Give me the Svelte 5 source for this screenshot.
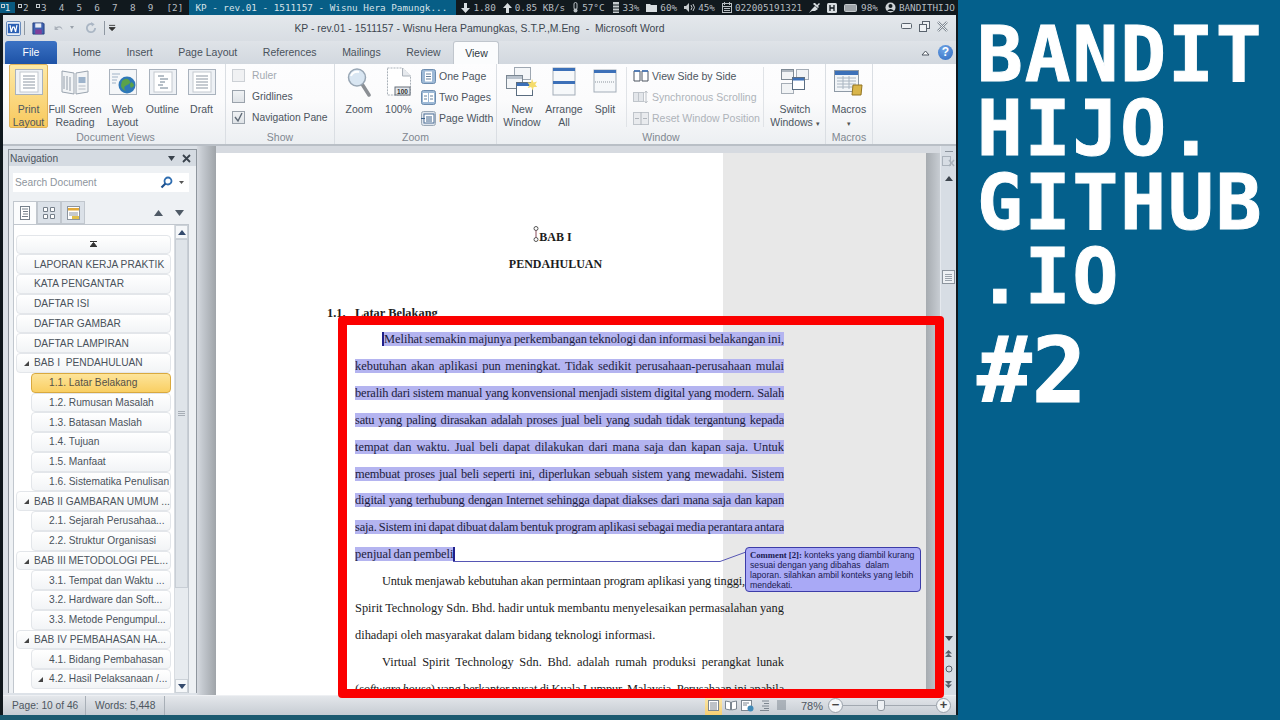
<script lang="ts">
	const workspaces = ['2', '3', '4', '5', '6', '7', '8', '9'];
	const tabs = ['Home', 'Insert', 'Page Layout', 'References', 'Mailings', 'Review'];

	const tree = [
		{ level: 0, text: '' , top: true },
		{ level: 0, text: 'LAPORAN KERJA PRAKTIK' },
		{ level: 0, text: 'KATA PENGANTAR' },
		{ level: 0, text: 'DAFTAR ISI' },
		{ level: 0, text: 'DAFTAR GAMBAR' },
		{ level: 0, text: 'DAFTAR LAMPIRAN' },
		{ level: 0, text: 'BAB I  PENDAHULUAN', open: true },
		{ level: 1, text: '1.1. Latar Belakang', active: true },
		{ level: 1, text: '1.2. Rumusan Masalah' },
		{ level: 1, text: '1.3. Batasan Maslah' },
		{ level: 1, text: '1.4. Tujuan' },
		{ level: 1, text: '1.5. Manfaat' },
		{ level: 1, text: '1.6. Sistematika Penulisan' },
		{ level: 0, text: 'BAB II GAMBARAN UMUM ...', open: true },
		{ level: 1, text: '2.1. Sejarah Perusahaa...' },
		{ level: 1, text: '2.2. Struktur Organisasi' },
		{ level: 0, text: 'BAB III METODOLOGI PEL...', open: true },
		{ level: 1, text: '3.1. Tempat dan Waktu ...' },
		{ level: 1, text: '3.2. Hardware dan Soft...' },
		{ level: 1, text: '3.3. Metode Pengumpul...' },
		{ level: 0, text: 'BAB IV PEMBAHASAN HA...', open: true },
		{ level: 1, text: '4.1. Bidang Pembahasan' },
		{ level: 1, text: '4.2. Hasil Pelaksanaan /...', open: true }
	];

	// lines Word squeezed together get the tight class
	const selected = [
		{ text: 'kebutuhan akan aplikasi pun meningkat. Tidak sedikit perusahaan-perusahaan mulai' },
		{ text: 'beralih dari sistem manual yang konvensional menjadi sistem digital yang modern. Salah', tight: true },
		{ text: 'satu yang paling dirasakan adalah proses jual beli yang sudah tidak tergantung kepada', tight: true },
		{ text: 'tempat dan waktu. Jual beli dapat dilakukan dari mana saja dan kapan saja. Untuk' },
		{ text: 'membuat proses jual beli seperti ini, diperlukan sebuah sistem yang mewadahi. Sistem', tight: true },
		{ text: 'digital yang terhubung dengan Internet sehingga dapat diakses dari mana saja dan kapan', tight: true },
		{ text: 'saja. Sistem ini dapat dibuat dalam bentuk program aplikasi sebagai media perantara antara', tight: true }
	];
</script>

{#snippet pageIcon(inner)}
	<svg width="30" height="28" viewBox="0 0 30 28">
		<rect x="1.5" y="1.5" width="27" height="25" fill="#eef1f5" stroke="#a9b2bd" />
		<rect x="6" y="4" width="18" height="20" fill="#fff" stroke="#c3c9d0" />
		{@render inner()}
	</svg>
{/snippet}

{#snippet lines()}
	<path d="M9 8h12M9 11h12M9 14h12M9 17h12M9 20h12" stroke="#8d97a3" />
{/snippet}

{#snippet outlineLines()}
	<path d="M10 8h6M12 11h8M12 14h5M10 17h5M12 20h8" stroke="#6f8090" />
{/snippet}

{#snippet arrow(d, color = '#4f5a66')}
	<svg width="9" height="6" viewBox="0 0 9 6"><path {d} fill={color} /></svg>
{/snippet}

<div class="app">
	<div class="left">
		<div class="topbar">
			<span class="ws current used">1</span>
			{#each workspaces as w, i}
				<span class="ws" class:used={i < 2}>{w}</span>
			{/each}
			<span class="ws wide">[2]</span>
			<span class="wintitle">KP - rev.01 - 1511157 - Wisnu Hera Pamungk...</span>
			<div class="stats">
				<svg class="st" width="9" height="10" viewBox="0 0 9 10"><path d="M3 0h3v5h3L4.500 10 0 5h3z" fill="#d8dde0" /></svg>
				<span>1.80</span>
				<svg class="st" width="9" height="10" viewBox="0 0 9 10"><path d="M3 10h3V5h3L4.500 0 0 5h3z" fill="#d8dde0" /></svg>
				<span>0.85 KB/s</span>
				<svg class="st" width="7" height="11" viewBox="0 0 7 11"><rect x="2" y="0.500" width="3" height="7" rx="1.500" fill="none" stroke="#b8bec2" /><circle cx="3.500" cy="8.500" r="2" fill="#b8bec2" /></svg>
				<span>57°C</span>
				<svg class="st" width="8" height="11" viewBox="0 0 8 11"><path d="M1 0h6v11H1z" fill="#c5cacd" /><path d="M0 3h8M0 6h8M0 9h8" stroke="#111a1f" /></svg>
				<span>33%</span>
				<svg class="st" width="11" height="9" viewBox="0 0 11 9"><path d="M0 1h4l1 1h6v7H0z" fill="#d8dde0" /></svg>
				<span>60%</span>
				<svg class="st" width="11" height="9" viewBox="0 0 11 9"><path d="M0 3h2l3-3v9L2 6H0z" fill="#c5cacd" /><path d="M7 2q2 2.500 0 5M9 1q3 3.500 0 7" stroke="#c5cacd" fill="none" /></svg>
				<span>45%</span>
				<svg class="st" width="10" height="11" viewBox="0 0 10 11"><rect x="0.500" y="1.500" width="9" height="9" fill="none" stroke="#b8bec2" /><path d="M2.500 0v3M7.500 0v3M1 4.500h8M2 6.500h6M2 8.500h6" stroke="#b8bec2" /></svg>
				<span>022005191321</span>
				<svg class="st" width="11" height="11" viewBox="0 0 11 11"><path d="M0 11l3-4 3-3 3 3-3 2H3zM6 1l2 2 2-2 1 1-2 2 1 1-1 1-5-4 1-1z" fill="#d8dde0" /></svg>
				<svg class="st" width="10" height="10" viewBox="0 0 10 10"><rect width="10" height="10" rx="1.500" fill="#d8dde0" /><path d="M3 2v6M7 2v6M3 5h4" stroke="#111a1f" stroke-width="1.300" /></svg>
				<svg class="st" width="14" height="8" viewBox="0 0 14 8"><rect x="0.500" y="0.500" width="12" height="7" rx="1" fill="#9ea4a8" stroke="#c5cacd" /></svg>
				<span>98%</span>
				<svg class="st" width="11" height="11" viewBox="0 0 11 11"><circle cx="5.500" cy="5.500" r="5" fill="#cfd4d7" /><circle cx="5.500" cy="4" r="2" fill="#111a1f" /><path d="M2 9q3.500-4 7 0" fill="#111a1f" /></svg>
				<span>BANDITHIJO</span>
			</div>
		</div>

		<div class="window">
			<div class="titlebar">
				<div class="qat">
					<svg width="15" height="15" viewBox="0 0 16 16"><rect x="0.500" y="0.500" width="15" height="15" rx="1.500" fill="#e8eef8" stroke="#5c82b8" /><rect x="2" y="3" width="12" height="10" fill="#2a5fb4" /><path d="M3.500 4.500l1.500 7 1.500-5 1.500 0 1.500 5 1.500-7" fill="none" stroke="#fff" stroke-width="1.300" transform="translate(0.700 0)" /></svg>
					<i class="qsep"></i>
					<svg class="q-save" width="13" height="13" viewBox="0 0 14 14"><path d="M1 1h11l1 1v11H1z" fill="#3f62b0" stroke="#26407e" /><rect x="3.500" y="1.500" width="6.500" height="4.500" fill="#e7ecf5" /><rect x="3.500" y="8" width="7" height="5" fill="#7f3f9a" /></svg>
					<svg class="q-undo" width="12" height="11" viewBox="0 0 15 12"><path d="M2 3v5h5L5 6q4-3 7 2-1-7-8-4z" fill="#aab1ba" /></svg>
					<span class="tinyarrow"></span>
					<svg class="q-redo" width="12" height="12" viewBox="0 0 13 13"><path d="M11 6.500A4.500 4.500 0 1 1 8 2.300" fill="none" stroke="#aab6c4" stroke-width="2" /><path d="M6.500 0l4 2.500-3 2.500z" fill="#aab6c4" /></svg>
					<i class="qsep q-sep2"></i>
					<svg width="7" height="8" viewBox="0 0 8 8"><path d="M0 1h7M0 3.500h7v0L3.500 7z" stroke="#333" stroke-width="1" fill="#333" /></svg>
				</div>
				<div class="doctitle">KP - rev.01 - 1511157 - Wisnu Hera Pamungkas, S.T.P.,M.Eng  -  Microsoft Word</div>
				<div class="winbtns">
					<svg width="11" height="6" viewBox="0 0 11 6"><rect x="0.500" y="0.500" width="10" height="5" rx="1" fill="#eef1f4" stroke="#59626d" /></svg>
					<svg width="11" height="11" viewBox="0 0 11 11"><rect x="3.500" y="0.500" width="7" height="7" fill="#eef1f4" stroke="#59626d" /><rect x="0.500" y="3.500" width="7" height="7" fill="#eef1f4" stroke="#59626d" /></svg>
					<svg width="11" height="11" viewBox="0 0 11 11"><path d="M1 1l9 9M10 1l-9 9" stroke="#7d8690" stroke-width="2.400" /><path d="M1 1l9 9M10 1l-9 9" stroke="#eef1f4" stroke-width="1" /></svg>
				</div>
			</div>

			<div class="tabbar">
				<span class="file">File</span>
				{#each tabs as t}
					<span class="tab">{t}</span>
				{/each}
				<span class="tab view">View</span>
				<div class="tabright">
					<svg width="9" height="6" viewBox="0 0 9 6"><path d="M1 5l3.500-4L8 5H1z" fill="#fff" stroke="#4c5560" /></svg>
					<span class="help">?</span>
				</div>
			</div>

			<div class="ribbon">
				<section class="group docviews">
					<div class="gbody">
						<div class="big on w39">
							{@render pageIcon(lines)}
							<span>Print<br />Layout</span>
						</div>
						<div class="big w54">
							<svg width="28" height="28" viewBox="0 0 28 28"><path d="M1 3l12 2v21L1 24z" fill="#f2f4f6" stroke="#9aa4af" /><path d="M27 3l-12 2v21l12-2z" fill="#f2f4f6" stroke="#9aa4af" /><path d="M3 8v13M6 8v14M9 9v14" stroke="#b4bbc4" stroke-width="1.500" /><rect x="17.500" y="9" width="7" height="6" fill="#9db3cb" /><path d="M17.500 18h7M17.500 21h7" stroke="#b4bbc4" /></svg>
							<span>Full Screen<br />Reading</span>
						</div>
						<div class="big w41">
							<svg width="28" height="28" viewBox="0 0 28 28"><rect x="0.500" y="1.500" width="27" height="25" fill="#f4f6f8" stroke="#a9b2bd" /><path d="M3 6h8M3 9h6M3 12h5M3 15h4" stroke="#9fb2c6" /><circle cx="18" cy="17" r="8.500" fill="#2f78b8" /><path d="M13 13q4-4 7-1t-2 5-1 6q-5-2-5-6zM22 14q3 1 3 4l-3 2q-2-3 0-6z" fill="#5aa24a" /></svg>
							<span>Web<br />Layout</span>
						</div>
						<div class="big w39">
							{@render pageIcon(outlineLines)}
							<span>Outline</span>
						</div>
						<div class="big w39">
							{@render pageIcon(lines)}
							<span>Draft</span>
						</div>
					</div>
					<div class="glabel">Document Views</div>
				</section>

				<section class="group show">
					<div class="gbody checks">
						<label class="check off"><i></i>Ruler</label>
						<label class="check"><i></i>Gridlines</label>
						<label class="check"><i><svg width="11" height="11" viewBox="0 0 11 11"><path d="M2 5l3 4 4-8" fill="none" stroke="#5f6a76" stroke-width="1.400" /></svg></i>Navigation Pane</label>
					</div>
					<div class="glabel">Show</div>
				</section>

				<section class="group zoom">
					<div class="gbody">
						<div class="big w40">
							<svg width="28" height="30" viewBox="0 0 28 30"><path d="M17 17l7 11" stroke="#8b8f94" stroke-width="3.500" stroke-linecap="round" /><circle cx="12" cy="10.500" r="8.500" fill="#d9e6f2" stroke="#99a7b5" stroke-width="1.500" /><path d="M6 9q2-5 8-4" stroke="#fff" stroke-width="2" fill="none" /></svg>
							<span>Zoom</span>
						</div>
						<div class="big w39">
							<svg width="26" height="30" viewBox="0 0 26 30"><path d="M1.500 1h15l8 8v19h-23z" fill="#fff" stroke="#a9b0b8" stroke-dasharray="2 1" /><path d="M16.500 1v8h8" fill="#e6e9ed" stroke="#a9b0b8" /><rect x="9" y="20" width="15" height="8" fill="#e3e7ec" stroke="#68717b" /><text x="16.500" y="26.500" class="hundred">100</text></svg>
							<span>100%</span>
						</div>
						<div class="smalls">
							<div class="small">
								<svg width="15" height="15" viewBox="0 0 15 15"><rect x="0.500" y="0.500" width="14" height="14" rx="2" fill="#9db9d6" stroke="#6d8cae" /><rect x="4" y="2.500" width="7" height="10" fill="#fff" /><path d="M5 5h5M5 7.500h5M5 10h5" stroke="#67809b" /></svg>
								One Page
							</div>
							<div class="small">
								<svg width="15" height="15" viewBox="0 0 15 15"><rect x="0.500" y="0.500" width="14" height="14" rx="2" fill="#9db9d6" stroke="#6d8cae" /><rect x="2" y="3" width="5" height="9" fill="#fff" /><rect x="8" y="3" width="5" height="9" fill="#fff" /><path d="M3 6h3M3 9h3M9 6h3M9 9h3" stroke="#67809b" /></svg>
								Two Pages
							</div>
							<div class="small">
								<svg width="15" height="15" viewBox="0 0 15 15"><rect x="0.500" y="0.500" width="14" height="14" rx="2" fill="#dfe5ec" stroke="#9aa8b6" /><rect x="3" y="3" width="10" height="9" fill="#fff" stroke="#4d6f96" /><path d="M0 7.500h4M5 6h6M5 8h6M5 10h6" stroke="#3c628c" /></svg>
								Page Width
							</div>
						</div>
					</div>
					<div class="glabel">Zoom</div>
				</section>

				<section class="group windowg">
					<div class="gbody">
						<div class="big w44">
							<svg width="32" height="30" viewBox="0 0 32 30"><rect x="8.500" y="0.500" width="16" height="12" fill="#f4f6f8" stroke="#9ea7b1" /><rect x="0.500" y="8.500" width="16" height="13" fill="#f4f6f8" stroke="#7b8793" /><rect x="1" y="9" width="15" height="3" fill="#b9c2cc" /><rect x="10.500" y="15.500" width="16" height="13" fill="#fff" stroke="#5b6d80" /><rect x="11" y="16" width="15" height="3" fill="#3c70b8" /><path d="M26 12l1.500 3.500 3.500-1-1.800 3 2 2.500-3.500 0-1 3.500-1.500-3.500-3.500 1 1.800-3-2-2.500 3.500 0z" fill="#f5dc6c" /></svg>
							<span>New<br />Window</span>
						</div>
						<div class="big w40">
							<svg width="24" height="30" viewBox="0 0 24 30"><rect x="1" y="1" width="22" height="27" fill="#f6f8fa" stroke="#a3adb8" /><rect x="1" y="1" width="22" height="3" fill="#3c70b8" /><rect x="1" y="14" width="22" height="3" fill="#3c70b8" /></svg>
							<span>Arrange<br />All</span>
						</div>
						<div class="big w38 split">
							<svg width="24" height="30" viewBox="0 0 24 30"><rect x="1" y="3" width="22" height="22" fill="#f6f8fa" stroke="#a3adb8" /><rect x="1" y="3" width="22" height="3" fill="#3c70b8" /><path d="M2 15h20" stroke="#8b949d" stroke-dasharray="1 1" /></svg>
							<span>Split</span>
						</div>
						<i class="vsep"></i>
						<div class="smalls wide">
							<div class="small">
								<svg width="16" height="12" viewBox="0 0 16 12"><path d="M1 1h6v10H1zM9 1h6v10H9z" fill="#fff" stroke="#4d5560" /><path d="M1 1h6M9 1h6" stroke="#3c70b8" stroke-width="1.500" /></svg>
								View Side by Side
							</div>
							<div class="small off">
								<svg width="16" height="14" viewBox="0 0 16 14"><rect x="0.500" y="2.500" width="5" height="9" fill="#e3e6ea" stroke="#c0c5cb" /><rect x="5.500" y="2.500" width="5" height="9" fill="#e3e6ea" stroke="#c0c5cb" /><path d="M13 1v12M11.500 3L13 1l1.500 2M11.500 11L13 13l1.500-2" fill="none" stroke="#bcc1c7" /></svg>
								Synchronous Scrolling
							</div>
							<div class="small off">
								<svg width="16" height="13" viewBox="0 0 16 13"><rect x="0.500" y="0.500" width="15" height="12" fill="#e9ebee" stroke="#c0c5cb" /><path d="M8 0v13M2 6.500h4M14 6.500h-4" stroke="#b0b5bb" /></svg>
								Reset Window Position
							</div>
						</div>
						<i class="vsep"></i>
						<div class="big w61">
							<svg width="28" height="26" viewBox="0 0 28 26"><rect x="0.500" y="0.500" width="12" height="10" fill="#f1f3f5" stroke="#7e8994" /><rect x="15.500" y="0.500" width="12" height="10" fill="#f1f3f5" stroke="#a5adb6" /><rect x="0.500" y="14.500" width="12" height="10" fill="#f1f3f5" stroke="#a5adb6" /><rect x="11.500" y="8.500" width="12" height="12" fill="#fff" stroke="#5c6e82" /><rect x="12" y="9" width="11" height="2.500" fill="#3c70b8" /><rect x="1" y="1" width="11" height="2" fill="#aeb6bf" /></svg>
							<span>Switch<br />Windows <small>▾</small></span>
						</div>
					</div>
					<div class="glabel">Window</div>
				</section>

				<section class="group macros">
					<div class="gbody">
						<div class="big w46">
							<svg width="30" height="28" viewBox="0 0 30 28"><rect x="0.500" y="2.500" width="24" height="21" fill="#f2f5f8" stroke="#8f9aa6" /><rect x="1" y="3" width="23" height="4" fill="#3c70b8" /><path d="M3 10h19M3 13h19M3 16h19M3 19h19M9 8v13M15 8v13" stroke="#a8b4c0" /><path d="M19 17h9l-1 10h-9z" fill="#d9b54a" stroke="#937522" /></svg>
							<span>Macros<br /><small>▾</small></span>
						</div>
					</div>
					<div class="glabel">Macros</div>
				</section>
			</div>

			<div class="workspace">
				<aside class="nav">
					<div class="navhead">
						<span>Navigation</span>
						<svg width="7" height="5" viewBox="0 0 7 5"><path d="M0 0h7L3.500 5z" fill="#39424c" /></svg>
						<svg width="9" height="9" viewBox="0 0 9 9"><path d="M1 1l7 7M8 1l-7 7" stroke="#39424c" stroke-width="1.800" /></svg>
					</div>
					<div class="search">
						<span>Search Document</span>
						<svg width="13" height="13" viewBox="0 0 13 13"><circle cx="8" cy="5" r="3.500" fill="none" stroke="#2f6db0" stroke-width="1.800" /><path d="M5.500 7.500L1.500 11.500" stroke="#1d4f8c" stroke-width="2.200" /></svg>
						<svg width="5" height="3" viewBox="0 0 5 3"><path d="M0 0h5L2.500 3z" fill="#555" /></svg>
					</div>
					<div class="navtabs">
						<span class="ntab on"><svg width="10" height="14" viewBox="0 0 10 14"><rect x="0.500" y="0.500" width="9" height="13" fill="#fff" stroke="#76808b" /><path d="M2 3h6M3 5.500h5M3 8h5M2 10.500h6" stroke="#76808b" /></svg></span>
						<span class="ntab"><svg width="12" height="12" viewBox="0 0 12 12"><path d="M.5.5h4v4h-4zM7.500.5h4v4h-4zM.5 7.500h4v4h-4zM7.500 7.500h4v4h-4z" fill="#fff" stroke="#76808b" /></svg></span>
						<span class="ntab"><svg width="13" height="14" viewBox="0 0 13 14"><rect x="0.500" y="0.500" width="12" height="13" fill="#fff" stroke="#8b949e" /><rect x="1" y="2" width="11" height="2.500" fill="#e2a93a" /><path d="M2 7h9M2 9h9" stroke="#8b949e" /><rect x="5" y="10" width="7" height="3" fill="#e2c04a" /></svg></span>
						<div class="navarrows">
							{@render arrow('M0 6L4.500 0 9 6z')}
							{@render arrow('M0 0L4.500 6 9 0z')}
						</div>
					</div>
					<div class="treebox">
						<div class="tree">
							{#each tree as item}
								<div class="item" class:sub={item.level === 1} class:active={item.active} class:top={item.top}>
									{#if item.top}
										<svg width="7" height="6" viewBox="0 0 7 6"><path d="M0 .5h7M0 6L3.500 1.500 7 6z" stroke="#333" stroke-width="1" fill="#333" /></svg>
									{:else}
										{#if item.open}
											<svg class="twisty" width="5" height="5" viewBox="0 0 5 5"><path d="M5 0v5H0z" fill="#444" /></svg>
										{/if}
										<span>{item.text}</span>
									{/if}
								</div>
							{/each}
						</div>
						<div class="vscroll">
							<div class="sbtn"><svg width="8" height="5" viewBox="0 0 8 5"><path d="M0 5L4 0l4 5z" fill="#344a6c" /></svg></div>
							<div class="sthumb"><i></i><i></i><i></i></div>
							<div class="sbtn down"><svg width="8" height="5" viewBox="0 0 8 5"><path d="M0 0l4 5 4-5z" fill="#344a6c" /></svg></div>
						</div>
					</div>
				</aside>

				<main class="docview">
					<div class="page">
						<div class="text">
							<div class="center">
								<span class="beam">
									<svg width="6" height="16" viewBox="0 0 6 16"><circle cx="3" cy="2.500" r="2" fill="#fff" stroke="#555" /><circle cx="3" cy="13.500" r="2" fill="#fff" stroke="#555" /><path d="M3 4.500v7" stroke="#8a4a5a" /></svg>
								</span>BAB I
							</div>
							<div class="center">PENDAHULUAN</div>
							<div class="heading"><span class="num">1.1.</span>Latar Belakang</div>
							<div class="line just indent fit"><mark><b class="caret"></b>Melihat semakin majunya perkembangan teknologi dan informasi belakangan ini,</mark></div>
							{#each selected as s}
								<div class="line just" class:tight={s.tight}><mark>{s.text}</mark></div>
							{/each}
							<div class="line closing"><mark>penjual dan pembeli</mark><b class="caret"></b></div>
							<div class="line just indent tight short">Untuk menjawab kebutuhan akan permintaan program aplikasi yang tinggi,</div>
							<div class="line just fit">Spirit Technology Sdn. Bhd. hadir untuk membantu menyelesaikan permasalahan yang</div>
							<div class="line">dihadapi oleh masyarakat dalam bidang teknologi informasi.</div>
							<div class="line just indent fit">Virtual Spirit Technology Sdn. Bhd. adalah rumah produksi perangkat lunak</div>
							<div class="line just tight">(<em>software house</em>) yang berkantor pusat di Kuala Lumpur, Malaysia. Perusahaan ini apabila</div>
						</div>
					</div>
					<div class="margin"></div>
					<div class="docshadow"></div>
				</main>

				<div class="docscroll">
					<div class="splitter"><i></i><svg width="13" height="12" viewBox="0 0 13 12"><rect x="0.500" y="0.500" width="8" height="9" fill="none" stroke="#aab2bb" /><path d="M7 4l5 6M12 4l-5 6" stroke="#aab2bb" stroke-width="1.500" /></svg></div>
					<div class="dsarrow"><svg width="8" height="5" viewBox="0 0 8 5"><path d="M0 5L4 0l4 5z" fill="#3b434c" /></svg></div>
					<div class="dsthumb"><i></i><i></i><i></i><i></i></div>
					<div class="dsfill"></div>
					<div class="dsarrow"><svg width="8" height="5" viewBox="0 0 8 5"><path d="M0 0l4 5 4-5z" fill="#3b434c" /></svg></div>
					<div class="browse">
						<svg width="7" height="7" viewBox="0 0 7 7"><path d="M0 3.500L3.500 0 7 3.500zM0 7L3.500 3.500 7 7z" fill="#56606a" /></svg>
						<svg width="8" height="8" viewBox="0 0 8 8"><circle cx="4" cy="4" r="3" fill="none" stroke="#56606a" /></svg>
						<svg width="7" height="7" viewBox="0 0 7 7"><path d="M0 0h7L3.500 3.500zM0 3.500h7L3.500 7z" fill="#56606a" /></svg>
					</div>
				</div>
			</div>

			<footer class="status">
				<span class="sitem">Page: 10 of 46</span>
				<span class="sitem">Words: 5,448</span>
				<div class="sright">
					<span class="vb on"><svg width="11" height="11" viewBox="0 0 11 11"><rect x="0.500" y="0.500" width="10" height="10" fill="#fff" stroke="#7c8690" /><path d="M2 3h7M2 5h7M2 7h7M2 9h7" stroke="#7c8690" /></svg></span>
					<span class="vb"><svg width="12" height="11" viewBox="0 0 12 11"><path d="M.5 1l5 1v8l-5-1zM11.500 1l-5 1v8l5-1z" fill="#fff" stroke="#7c8690" /></svg></span>
					<span class="vb"><svg width="13" height="12" viewBox="0 0 13 12"><rect x="0.500" y="0.500" width="10" height="10" fill="#fff" stroke="#7c8690" /><path d="M2 3h6M2 5h4" stroke="#7c8690" /><circle cx="9.500" cy="8.500" r="3" fill="#3f8ab8" /></svg></span>
					<span class="vb"><svg width="11" height="11" viewBox="0 0 11 11"><path d="M3 1h7M5 3.500h5M3 6h7M5 8.500h5M1 10.500h9" stroke="#7c8690" /></svg></span>
					<span class="vb"><svg width="11" height="11" viewBox="0 0 11 11"><path d="M1 1h9M1 3h9M1 5h9M1 7h9M1 9h9" stroke="#7c8690" /></svg></span>
					<span class="pct">78%</span>
					<span class="zbtn">−</span>
					<div class="slider"><i class="knob"></i></div>
					<span class="zbtn">+</span>
				</div>
			</footer>
		</div>
		<div class="strip"></div>

		<!-- comment balloon and the red marker lie over the document -->
		<svg class="connector" width="300" height="20" viewBox="0 0 300 20">
			<path d="M0 15.500H267L293 6" fill="none" stroke="#5656b4" />
		</svg>
		<div class="balloon">
			<b>Comment [2]:</b> konteks yang diambil kurang<br />sesuai dengan yang dibahas  dalam<br />laporan. silahkan ambil konteks yang lebih<br />mendekati.
		</div>
		<div class="redframe"></div>
	</div>

	<div class="poster">
		<div>BANDIT</div>
		<div>HIJO.</div>
		<div>GITHUB</div>
		<div>.IO</div>
		<div class="num2">#2</div>
	</div>
</div>

<style>
	:global(body) {
		margin: 0;
		background: #04608c;
	}

	.app {
		display: flex;
		width: 1280px;
		height: 720px;
		overflow: hidden;
		font-family: 'Liberation Sans', Arial, sans-serif;
	}

	.left {
		position: relative;
		display: flex;
		flex-direction: column;
		width: 958px;
		height: 720px;
		background: #10181d;
	}

	/* panel bar */
	.topbar {
		display: flex;
		align-items: center;
		height: 15px;
		flex: none;
		font-family: 'DejaVu Sans Mono', monospace;
		font-size: 9.3px;
		color: #b6bcc0;
		background: #11191e;
		white-space: nowrap;
		overflow: hidden;
	}

	.ws {
		position: relative;
		width: 17.8px;
		text-align: center;
		flex: none;
	}

	.ws.used::before {
		content: '';
		position: absolute;
		left: 1px;
		top: 2px;
		width: 2px;
		height: 2px;
		border: 1px solid #c4cace;
	}

	.ws.current {
		width: 15px;
		margin-right: 2px;
		color: #dfe8ec;
		background: #0a5a80;
	}

	.ws.wide {
		width: 29px;
		margin-left: 1px;
	}

	.wintitle {
		display: block;
		width: 267px;
		height: 15px;
		line-height: 15px;
		padding-left: 6px;
		box-sizing: border-box;
		flex: none;
		background: #075e86;
		color: #d6e2e8;
	}

	.stats {
		display: flex;
		align-items: center;
		gap: 3px;
		padding-left: 1px;
	}

	.st {
		margin-left: 4px;
		flex: none;
	}

	/* word window */
	.window {
		display: flex;
		flex-direction: column;
		height: 700px;
		margin: 0 2px 0 3px;
		flex: none;
		background: #dde2e8;
		border-radius: 3px 3px 0 0;
	}

	.strip {
		flex: 1;
		background: #1b5a70;
	}

	.titlebar {
		position: relative;
		display: flex;
		align-items: center;
		height: 26px;
		flex: none;
		padding: 0 4px 0 3px;
		background: linear-gradient(#e4e8ec, #d8dde3);
	}

	.qat {
		display: flex;
		align-items: center;
		gap: 3px;
	}

	.qsep {
		width: 1px;
		height: 14px;
		background: #8f98a2;
	}

	.q-save {
		margin-left: 4px;
	}

	.q-undo {
		margin-left: 5px;
	}

	.q-redo {
		margin-left: 8px;
	}

	.q-sep2 {
		margin-left: 4px;
		margin-right: 1px;
	}

	.tinyarrow {
		width: 0;
		height: 0;
		margin: 0 0 0 2px;
		border: 2px solid transparent;
		border-top: 3px solid #9aa2ab;
	}

	.doctitle {
		position: absolute;
		left: 0;
		right: 0;
		text-align: center;
		font-size: 10.400px;
		color: #3d4650;
		white-space: pre;
	}

	.winbtns {
		display: flex;
		align-items: center;
		gap: 7px;
		margin-left: auto;
		margin-right: 4px;
		margin-top: -4px;
	}

	.tabbar {
		display: flex;
		align-items: flex-end;
		height: 23px;
		flex: none;
		padding-left: 2px;
		font-size: 10.500px;
		color: #49525c;
		background: linear-gradient(#dfe3e8, #d2d8df);
	}

	.file {
		width: 52px;
		height: 23px;
		line-height: 23px;
		text-align: center;
		color: #fff;
		background: linear-gradient(#3b72c4, #1d52a6);
		border-radius: 3px 3px 0 0;
		margin-right: 3px;
	}

	.tab {
		height: 23px;
		line-height: 23px;
		padding: 0 12.800px;
		white-space: nowrap;
	}

	.tab.view {
		width: 46px;
		padding: 0;
		box-sizing: border-box;
		text-align: center;
		color: #2f3841;
		background: #fbfcfd;
		border: 1px solid #c0c6cd;
		border-bottom: 0;
		border-radius: 3px 3px 0 0;
	}

	.tabright {
		display: flex;
		align-items: center;
		gap: 8px;
		margin-left: auto;
		margin-right: 3px;
		height: 23px;
	}

	.help {
		width: 15px;
		height: 15px;
		line-height: 15px;
		text-align: center;
		color: #fff;
		font-weight: bold;
		font-size: 12px;
		border-radius: 50%;
		background: radial-gradient(circle at 40% 30%, #6fa5e6, #2e69c0);
	}

	.ribbon {
		display: flex;
		height: 82px;
		flex: none;
		padding-left: 3px;
		box-sizing: border-box;
		font-size: 10.500px;
		color: #4c555f;
		background: linear-gradient(#fdfdfe 0, #fbfbfc 45%, #eceff2 100%);
		border-bottom: 2px solid #b9bfc6;
	}

	.group {
		display: flex;
		flex-direction: column;
		height: 80px;
		box-sizing: border-box;
		border-right: 1px solid #dadee3;
		flex: none;
	}

	.docviews { width: 220px; }
	.show { width: 109px; }
	.zoom { width: 162px; }
	.windowg { width: 329px; }
	.macros { width: 47px; }

	.gbody {
		display: flex;
		height: 66px;
		flex: none;
	}

	.glabel {
		margin-top: 1px;
		text-align: center;
		font-size: 10.500px;
		line-height: 13px;
		color: #7f8790;
	}

	.big {
		display: flex;
		flex-direction: column;
		align-items: center;
		height: 64px;
		padding-top: 3px;
		box-sizing: border-box;
		flex: none;
		text-align: center;
		line-height: 13px;
		font-size: 10.500px;
		white-space: nowrap;
	}

	.w38 { width: 42px; }
	.w39 { width: 39px; }
	.w40 { width: 40px; }
	.w41 { width: 41px; }
	.w44 { width: 44px; }
	.w46 { width: 46px; }
	.w54 { width: 54px; }
	.w61 { width: 62px; }

	.big svg {
		height: 30px;
		margin-bottom: 6px;
		flex: none;
	}

	.big small {
		font-size: 7px;
		color: #555;
	}

	.big.on {
		background: linear-gradient(#fde9a6, #f8c95e);
		border: 1px solid #e0b35a;
		border-radius: 2px;
		padding-top: 2px;
	}

	.docviews .gbody {
		padding-left: 3px;
	}

	.checks {
		flex-direction: column;
		gap: 6px;
		padding: 4px 0 0 6px;
		box-sizing: border-box;
	}

	.check {
		display: flex;
		align-items: center;
		gap: 7px;
		height: 15px;
		font-size: 10.300px;
	}

	.check i {
		display: flex;
		align-items: center;
		justify-content: center;
		width: 11px;
		height: 11px;
		background: linear-gradient(#f0f2f4, #dfe3e7);
		border: 1px solid #9aa2ab;
	}

	.check.off {
		color: #a3a9b0;
	}

	.check.off i {
		border-color: #ccd0d5;
		background: #f0f1f3;
	}

	.zoom .gbody {
		padding-left: 4px;
	}

	.smalls {
		display: flex;
		flex-direction: column;
		gap: 5px;
		padding: 4px 0 0 3px;
		font-size: 10.500px;
		white-space: nowrap;
	}

	.small {
		display: flex;
		align-items: center;
		gap: 3px;
		height: 16px;
	}

	.small.off {
		color: #aeb3b9;
	}

	.vsep {
		width: 1px;
		height: 60px;
		margin-top: 3px;
		background: #e0e3e7;
		flex: none;
	}

	.windowg .gbody {
		padding-left: 3px;
	}

	.smalls.wide {
		width: 136px;
		padding-left: 6px;
		flex: none;
		box-sizing: border-box;
	}

	/* work area */
	.workspace {
		position: relative;
		display: flex;
		height: 549px;
		flex: none;
		overflow: hidden;
	}

	.nav {
		display: flex;
		flex-direction: column;
		width: 189px;
		margin: 3px 0 2px 5px;
		box-sizing: border-box;
		flex: none;
		background: #eef1f4;
		border: 1px solid #8f969e;
		border-bottom-width: 0;
	}

	.navhead {
		display: flex;
		align-items: center;
		gap: 7px;
		height: 16px;
		flex: none;
		padding: 1px 5px 0 1px;
		box-sizing: border-box;
		font-size: 10.200px;
		color: #4b545e;
		background: #d5dbe2;
	}

	.navhead span {
		margin-right: auto;
	}

	.search {
		display: flex;
		align-items: center;
		gap: 6px;
		height: 19px;
		flex: none;
		margin: 7px 7px 0 4px;
		padding: 0 5px 0 2px;
		font-size: 10.200px;
		color: #8e959d;
		background: #fff;
	}

	.search span {
		margin-right: auto;
	}

	.navtabs {
		display: flex;
		align-items: flex-end;
		height: 23px;
		flex: none;
		margin: 9px 7px 0 4px;
	}

	.ntab {
		display: flex;
		align-items: center;
		justify-content: center;
		width: 24px;
		height: 23px;
		box-sizing: border-box;
		background: #dbe1e8;
		border: 1px solid #c1c7ce;
	}

	.ntab.on {
		background: #fbfcfd;
		border-bottom: 0;
	}

	.navarrows {
		display: flex;
		align-items: center;
		gap: 12px;
		height: 23px;
		margin-left: auto;
		padding-right: 5px;
	}

	.treebox {
		display: flex;
		flex: 1;
		min-height: 0;
		margin: 0 7px 0 4px;
		background: #fff;
		border: 1px solid #c1c7ce;
		border-bottom: 0;
	}

	.tree {
		flex: 1;
		min-width: 0;
		overflow: hidden;
		padding: 9.500px 3px 0 2px;
	}

	.item {
		position: relative;
		display: flex;
		align-items: center;
		height: 19.750px;
		box-sizing: border-box;
		padding-left: 17px;
		font-size: 10.200px;
		color: #4a525b;
		white-space: pre;
		background: linear-gradient(#ffffff, #f2f4f6);
		border: 1px solid #e3e6ea;
		border-radius: 4px;
	}

	.item.sub {
		margin-left: 15px;
	}

	.item.top {
		justify-content: center;
		padding-left: 0;
	}

	.item.active {
		background: linear-gradient(#fde49a, #f9cf63);
		border-color: #d9a93e;
		color: #555148;
	}

	.twisty {
		position: absolute;
		left: 7px;
		top: 7px;
	}

	.item.sub .twisty {
		left: 6px;
	}

	.vscroll {
		display: flex;
		flex-direction: column;
		width: 13px;
		flex: none;
		background: #e7ebef;
		border-left: 1px solid #d8dce1;
	}

	.sbtn {
		display: flex;
		align-items: center;
		justify-content: center;
		height: 14px;
		flex: none;
		background: #f5f7f9;
		border: 1px solid #ccd2d8;
		box-sizing: border-box;
	}

	.sbtn.down {
		margin-top: auto;
	}

	.sthumb {
		display: flex;
		flex-direction: column;
		justify-content: center;
		gap: 1px;
		height: 349px;
		box-sizing: border-box;
		background: #dfe4e9;
		border: 1px solid #c8ced5;
	}

	.sthumb i {
		height: 1px;
		margin: 0 2px;
		background: #a6adb5;
	}

	.docview {
		position: relative;
		display: flex;
		flex: 1;
		min-width: 0;
		height: 549px;
		padding: 7px 0 0 19px;
		box-sizing: border-box;
		background: linear-gradient(90deg, #d6dae0 0, #c3c8ce 30%, #9fa4a9 100%) 0 0 / 19px 100% no-repeat, #d6dae0;
		overflow: hidden;
	}

	.page {
		width: 507px;
		flex: none;
		padding-top: 71px;
		box-sizing: border-box;
		background: #fff;
	}

	.margin {
		width: 203px;
		flex: none;
		background: #e8e8e8;
	}

	.docshadow {
		flex: 1;
		background: linear-gradient(90deg, #a6abb0, #c8cdd3);
	}

	.text {
		position: relative;
		width: 429px;
		margin-left: 139px;
		font-family: 'Liberation Serif', 'Times New Roman', serif;
		font-size: 12.400px;
		color: #1c1c1c;
	}

	.center {
		height: 27px;
		line-height: 27px;
		width: 401px;
		text-align: center;
		font-size: 12px;
		font-weight: bold;
	}

	.beam {
		position: relative;
	}

	.beam svg {
		position: absolute;
		left: -6px;
		top: -4px;
	}

	.heading {
		position: relative;
		height: 26px;
		line-height: 26px;
		margin-top: 22px;
		font-weight: bold;
	}

	.num {
		position: absolute;
		left: -28px;
	}

	.line {
		height: 26.920px;
		line-height: 26.920px;
		white-space: nowrap;
	}

	.line.just {
		white-space: normal;
		text-align: justify;
		text-align-last: justify;
		width: 429px;
		overflow: hidden;
	}

	.line.just.short {
		width: 390px;
	}

	.line.indent {
		padding-left: 27px;
		box-sizing: border-box;
	}

	.tight {
		word-spacing: -2.500px;
		letter-spacing: -0.150px;
	}

	.fit {
		word-spacing: -2.500px;
	}

	.closing {
		word-spacing: -1px;
	}

	mark {
		color: #1c1c3c;
		background: #b4b4f0;
	}

	.caret {
		display: inline-block;
		width: 2px;
		height: 14px;
		vertical-align: -3px;
		background: #20208c;
	}

	.docscroll {
		display: flex;
		flex-direction: column;
		align-items: center;
		width: 16px;
		flex: none;
		background: #d7dde4;
		border-left: 1px solid #e5e9ee;
		box-sizing: border-box;
	}

	.splitter {
		display: flex;
		flex-direction: column;
		align-items: center;
		height: 27px;
		flex: none;
		padding-top: 5px;
		gap: 4px;
		box-sizing: border-box;
	}

	.splitter i {
		width: 8px;
		height: 1px;
		background: #8b939c;
	}

	.dsarrow {
		display: flex;
		align-items: center;
		justify-content: center;
		height: 10px;
		flex: none;
	}

	.dsthumb {
		display: flex;
		flex-direction: column;
		justify-content: center;
		gap: 1px;
		width: 13px;
		height: 14px;
		margin-top: 87px;
		flex: none;
		box-sizing: border-box;
		background: #eef1f4;
		border: 1px solid #8c949d;
	}

	.dsthumb i {
		height: 1px;
		margin: 0 2px;
		background: #9aa2ab;
	}

	.dsfill {
		flex: 1;
	}

	.browse {
		display: flex;
		flex-direction: column;
		align-items: center;
		gap: 8px;
		height: 52px;
		padding-top: 7px;
		flex: none;
		box-sizing: border-box;
	}

	.status {
		display: flex;
		align-items: center;
		height: 20px;
		flex: none;
		font-size: 10.200px;
		color: #4d5660;
		background: linear-gradient(#e4e7eb, #c6ccd3);
		border-top: 1px solid #eef0f3;
		box-sizing: border-box;
	}

	.sitem {
		display: flex;
		align-items: center;
		height: 20px;
		padding: 0 9px;
		border-right: 1px solid #a8afb7;
		white-space: nowrap;
	}

	.sitem:first-child {
		width: 83px;
		box-sizing: border-box;
	}

	.sright {
		display: flex;
		align-items: center;
		margin-left: auto;
		margin-right: 5px;
	}

	.vb {
		display: flex;
		align-items: center;
		justify-content: center;
		width: 17px;
		height: 18px;
	}

	.vb.on {
		background: linear-gradient(#fbe8ab, #f5cf73);
	}

	.pct {
		margin: 0 7px 0 11px;
		width: 20px;
		font-size: 11px;
	}

	.zbtn {
		width: 13px;
		height: 13px;
		line-height: 12px;
		text-align: center;
		font-size: 13px;
		font-weight: bold;
		color: #444;
		background: #f5f7f9;
		border: 1px solid #98a0a9;
		border-radius: 50%;
	}

	.slider {
		position: relative;
		width: 93px;
		height: 1px;
		background: #a2a9b1;
	}

	.knob {
		position: absolute;
		left: 34px;
		top: -5px;
		width: 6px;
		height: 9px;
		background: #eef1f4;
		border: 1px solid #8f97a0;
		border-radius: 1px 1px 3px 3px;
	}

	.connector {
		position: absolute;
		left: 453px;
		top: 546px;
	}

	.balloon {
		position: absolute;
		left: 745px;
		top: 547px;
		width: 176px;
		height: 45px;
		padding: 2px 4px;
		box-sizing: border-box;
		font-size: 8.700px;
		line-height: 10px;
		white-space: pre;
		color: #1a1a50;
		background: #a9a9f6;
		border: 1px solid #3c3ca8;
		border-radius: 4px;
	}

	.balloon b {
		font-family: 'Liberation Serif', serif;
		font-size: 8.700px;
	}

	.redframe {
		position: absolute;
		left: 338px;
		top: 316px;
		width: 606px;
		height: 382px;
		box-sizing: border-box;
		border: 9px solid #fb0000;
		border-radius: 4px;
	}

	.hundred {
		font-family: 'Liberation Sans', sans-serif;
		font-size: 6.500px;
		font-weight: bold;
		text-anchor: middle;
		fill: #333;
	}

	/* title card */
	.poster {
		flex: 1;
		padding: 18px 0 0 19px;
		font-family: 'DejaVu Sans Mono', monospace;
		font-weight: bold;
		font-size: 76px;
		line-height: 74px;
		letter-spacing: 2px;
		color: #fff;
		-webkit-text-stroke: 1px #fff;
		background: #04608c;
	}

	.num2 {
		font-size: 91px;
		line-height: 91px;
		letter-spacing: 0;
		margin-top: 11px;
	}
</style>
